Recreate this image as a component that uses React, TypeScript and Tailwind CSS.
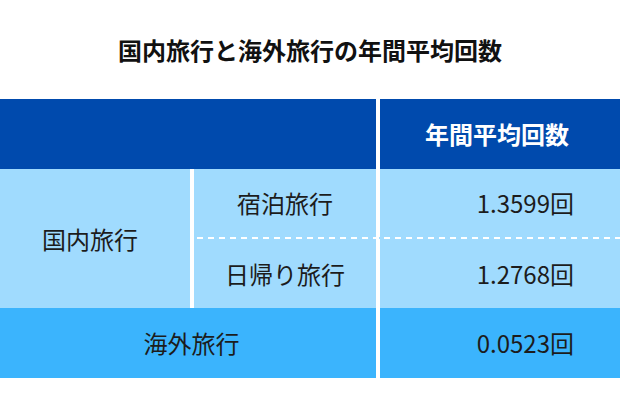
import React from "react";

const font = { fontFamily: '"Noto Sans CJK JP", "Noto Sans", sans-serif' };

export default function App() {
  return (
    <div
      className="w-[620px] h-[420px] bg-white flex flex-col text-[24px] leading-none text-[#1c1c1c]"
      style={font}
    >
      <div className="h-[99px] flex items-center justify-center font-bold text-[#111]">
        国内旅行と海外旅行の年間平均回数
      </div>

      {/* header */}
      <div className="flex h-[70px]">
        <div className="w-[376px] bg-[#004AAD]" />
        <div className="w-[4px] bg-white" />
        <div className="flex-1 bg-[#004AAD] flex items-center justify-center pr-[6px] text-white font-bold">
          年間平均回数
        </div>
      </div>

      {/* domestic */}
      <div className="flex h-[139px]">
        <div className="w-[190px] bg-[#A0DBFE] flex items-center justify-center pr-[10px]">
          国内旅行
        </div>
        <div className="w-[4px] bg-white" />
        <div className="flex-1 flex flex-col">
          <div className="flex h-[68px]">
            <div className="w-[182px] bg-[#A0DBFE] flex items-center justify-center">
              宿泊旅行
            </div>
            <div className="w-[4px] bg-white" />
            <div className="flex-1 bg-[#A0DBFE] flex items-center justify-end pr-[46px]">
              1.3599回
            </div>
          </div>
          <div className="h-[2px] bg-[#A0DBFE] bg-[repeating-linear-gradient(to_right,transparent_0,transparent_3px,#ffffff_3px,#ffffff_9px,transparent_9px,transparent_11px)]" />
          <div className="flex h-[69px]">
            <div className="w-[182px] bg-[#A0DBFE] flex items-center justify-center">
              日帰り旅行
            </div>
            <div className="w-[4px] bg-white" />
            <div className="flex-1 bg-[#A0DBFE] flex items-center justify-end pr-[46px]">
              1.2768回
            </div>
          </div>
        </div>
      </div>

      {/* overseas */}
      <div className="flex h-[70px]">
        <div className="w-[376px] bg-[#3BB4FD] flex items-center justify-center pl-[7px]">
          海外旅行
        </div>
        <div className="w-[4px] bg-white" />
        <div className="flex-1 bg-[#3BB4FD] flex items-center justify-end pr-[46px]">
          0.0523回
        </div>
      </div>
    </div>
  );
}
